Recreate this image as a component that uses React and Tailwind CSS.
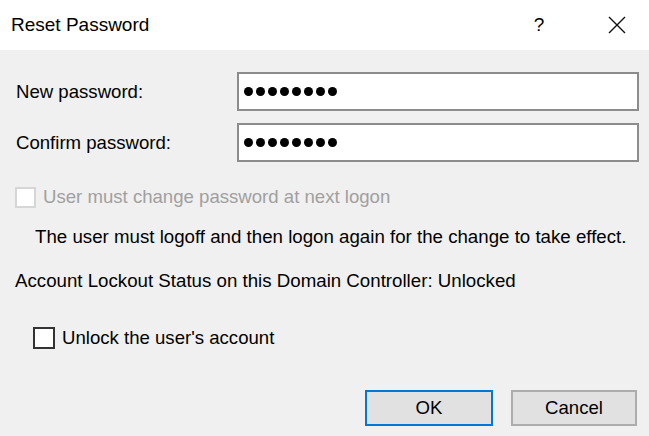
import { useState } from 'react'

function Dots() {
  return (
    <div className="flex items-center gap-[3px]">
      {Array.from({ length: 8 }).map((_, i) => (
        <div key={i} className="w-[9px] h-[9px] rounded-full bg-black" />
      ))}
    </div>
  )
}

function PasswordRow({ label }) {
  return (
    <div className="flex items-center h-[39px]">
      <div className="w-[237px] pl-[16px] text-[18.6px] text-black">{label}</div>
      <div className="w-[402px] h-[39px] bg-white border-2 border-[#8c8c8c] flex items-center pl-[5px]">
        <Dots />
      </div>
    </div>
  )
}

export default function App() {
  const [unlock, setUnlock] = useState(false)

  return (
    <div className="w-[649px] h-[436px] bg-[#f0f0f0] overflow-hidden font-['Liberation_Sans',Arial,sans-serif] text-black">
      {/* title bar */}
      <div className="h-[50px] bg-white flex items-center">
        <div className="pl-[11px] text-[19px] flex-1">Reset Password</div>
        <div className="w-[40px] text-[19px] text-center mr-[49px]">?</div>
        <div className="w-[18px] h-[18px] mr-[23px]">
          <svg width="18" height="18" viewBox="0 0 18 18">
            <path d="M1 1L17 17M17 1L1 17" stroke="#111" strokeWidth="1.4" fill="none" />
          </svg>
        </div>
      </div>

      <div className="pt-[22px] flex flex-col">
        <div className="flex flex-col gap-[12px]">
          <PasswordRow label="New password:" />
          <PasswordRow label="Confirm password:" />
        </div>

        <div className="mt-[24px] h-[22px] flex items-center pl-[15px]">
          <div className="w-[21px] h-[21px] bg-white border-2 border-[#d6d6d6]" />
          <span className="ml-[7px] text-[18.6px] text-[#a0a0a0]">User must change password at next logon</span>
        </div>

        <div className="mt-[18px] h-[22px] flex items-center pl-[35px] text-[18.7px]">
          The user must logoff and then logon again for the change to take effect.
        </div>

        <div className="mt-[22px] h-[22px] flex items-center pl-[15px] text-[18.7px]">
          Account Lockout Status on this Domain Controller: Unlocked
        </div>

        <label className="mt-[35px] h-[22px] flex items-center pl-[33px] cursor-default">
          <button
            onClick={() => setUnlock(!unlock)}
            className="w-[22px] h-[22px] bg-white border-2 border-[#333] flex items-center justify-center"
          >
            {unlock && (
              <svg width="14" height="14" viewBox="0 0 14 14">
                <path d="M2 7l3.5 3.5L12 3" stroke="#000" strokeWidth="2" fill="none" />
              </svg>
            )}
          </button>
          <span className="ml-[7px] text-[18.6px]">Unlock the user's account</span>
        </label>

        <div className="mt-[41px] flex justify-end gap-[18px] pr-[12px]">
          <button className="w-[128px] h-[36px] bg-[#e1e1e1] border-2 border-[#0078d7] text-[18.6px]">OK</button>
          <button className="w-[126px] h-[36px] bg-[#e1e1e1] border-2 border-[#adadad] text-[18.6px]">Cancel</button>
        </div>
      </div>
    </div>
  )
}
